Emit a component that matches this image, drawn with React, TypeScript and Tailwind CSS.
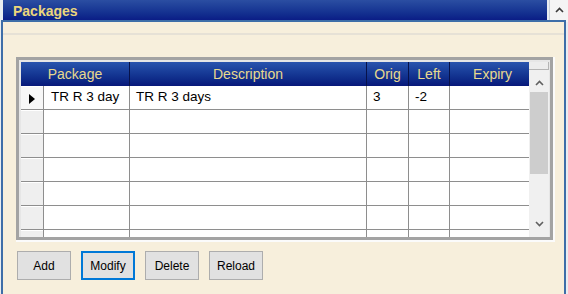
const columns = [
  { key: "pkg", title: "Package", width: "w-[86px]" },
  { key: "desc", title: "Description", width: "w-[237px]" },
  { key: "orig", title: "Orig", width: "w-[42px]" },
  { key: "left", title: "Left", width: "w-[41px]" },
  { key: "exp", title: "Expiry", width: "w-[79px]" },
];

const rows = [
  { pkg: "TR R 3 day", desc: "TR R 3 days", orig: "3", left: "-2", exp: "" },
  { pkg: "", desc: "", orig: "", left: "", exp: "" },
  { pkg: "", desc: "", orig: "", left: "", exp: "" },
  { pkg: "", desc: "", orig: "", left: "", exp: "" },
  { pkg: "", desc: "", orig: "", left: "", exp: "" },
  { pkg: "", desc: "", orig: "", left: "", exp: "" },
  { pkg: "", desc: "", orig: "", left: "", exp: "" },
];

function Chevron({ down = false, className = "" }: { down?: boolean; className?: string }) {
  return (
    <svg width="9" height="6" viewBox="0 0 9 6" className={className}>
      <polyline
        points={down ? "1,1 4.5,4.5 8,1" : "1,5 4.5,1.5 8,5"}
        fill="none"
        stroke="currentColor"
        strokeWidth="1.6"
      />
    </svg>
  );
}

function Button({ label, focused = false }: { label: string; focused?: boolean }) {
  return (
    <div
      className={`w-[54px] h-[29px] flex items-center justify-center bg-[#e1e1e1] text-[12px] text-black ${
        focused ? "border-2 border-[#0078d7]" : "border border-[#adadad]"
      }`}
    >
      {label}
    </div>
  );
}

export default function App() {
  return (
    <div
      className="w-[568px] h-[294px] overflow-hidden flex flex-col bg-[#e9edf1]"
      style={{ fontFamily: '"Liberation Sans", Arial, sans-serif' }}
    >
      {/* Title bar */}
      <div className="flex h-[20px] shrink-0">
        <div className="ml-[3px] w-[544px] h-full bg-gradient-to-b from-[#2b4ea2] to-[#0b1d86] flex items-center pl-[10px]">
          <span className="text-[14px] font-bold text-[#ecd67c] leading-none pt-[1px]">Packages</span>
        </div>
        <div className="ml-[2px] w-[19px] h-[22px] bg-[#f4f4f4] border-l border-[#c8d0da] flex items-center justify-center text-[#3a3a3a]">
          <Chevron className="mb-[2px]" />
        </div>
      </div>

      {/* Body */}
      <div className="flex-1 ml-[1px] w-[565px] border-l-2 border-r-2 border-t-2 border-[#3e6ea8] bg-[#f7efdc] pl-[13px] pr-[8px]">
        <div className="mt-[11px] -ml-[13px] -mr-[8px] h-[2px] bg-[#e6e1d6]" />

        {/* Grid */}
        <div className="mt-[22px] w-[539px] border-r-2 border-b-2 border-[#fbfbfb]">
          <div className="h-[183px] border-[3px] border-[#a3a3a3] bg-[#e6e6e6] pl-[2px] pt-[2px] flex overflow-hidden">
            <div className="w-[508px] h-[175px] overflow-hidden bg-white">
              {/* Header */}
              <div className="flex h-[24px] bg-gradient-to-b from-[#2954ae] to-[#08187a] text-[14px] text-[#e8d98e]">
                <div className="w-[109px] border-r border-[#07124a] flex items-center justify-center">Package</div>
                <div className="w-[237px] border-r border-[#07124a] flex items-center justify-center">Description</div>
                <div className="w-[42px] border-r border-[#07124a] flex items-center justify-center">Orig</div>
                <div className="w-[41px] border-r border-[#07124a] flex items-center justify-center">Left</div>
                <div className="w-[79px] flex items-center justify-center pl-[6px]">Expiry</div>
              </div>

              {/* Rows */}
              {rows.map((row, i) => (
                <div key={i} className="flex h-[24px] text-[13.5px] text-black">
                  <div
                    className={`w-[23px] border-r border-b border-[#8e8e8e] flex items-center justify-center pt-[2px] shadow-[inset_0_1px_0_#ffffff] ${
                      i === 0 ? "bg-[#f7f7f7]" : "bg-[#efefef]"
                    }`}
                  >
                    {i === 0 && (
                      <svg width="6" height="10" viewBox="0 0 6 10">
                        <polygon points="0,0 6,5 0,10" fill="#000" />
                      </svg>
                    )}
                  </div>
                  {columns.map((col, c) => (
                    <div
                      key={col.key}
                      className={`${col.width} border-b border-[#8e8e8e] ${
                        c < columns.length - 1 ? "border-r" : ""
                      } ${c === 0 ? "pl-[7px]" : "pl-[6px]"} pt-[2px] leading-[18px] whitespace-nowrap overflow-hidden`}
                    >
                      {row[col.key as keyof typeof row]}
                    </div>
                  ))}
                </div>
              ))}
            </div>

            {/* Vertical scrollbar */}
            <div className="w-[20px] h-[175px] flex flex-col bg-[#f0f0f0]">
              <div className="h-[8px] bg-[#ececec] border-b border-r border-[#b4b4b4]" />
              <div className="h-[20px] flex items-center justify-center text-[#606060]">
                <Chevron className="mt-[6px]" />
              </div>
              <div className="mx-[1px] mt-[2px] h-[82px] bg-[#cdcdcd]" />
              <div className="flex-1" />
              <div className="h-[22px] flex items-center justify-center text-[#606060] pb-[4px]">
                <Chevron down />
              </div>
            </div>
          </div>
        </div>

        {/* Buttons */}
        <div className="mt-[9px] flex gap-[10px] pl-[1px]">
          <Button label="Add" />
          <Button label="Modify" focused />
          <Button label="Delete" />
          <Button label="Reload" />
        </div>
      </div>
    </div>
  );
}
